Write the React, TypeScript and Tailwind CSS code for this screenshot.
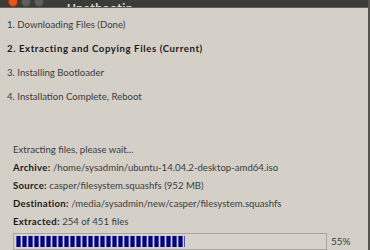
import React from "react";

const steps = [
  { label: "1. Downloading Files (Done)", current: false },
  { label: "2. Extracting and Copying Files (Current)", current: true },
  { label: "3. Installing Bootloader", current: false },
  { label: "4. Installation Complete, Reboot", current: false },
];

const details = [
  { label: "Archive:", value: "/home/sysadmin/ubuntu-14.04.2-desktop-amd64.iso" },
  { label: "Source:", value: "casper/filesystem.squashfs (952 MB)" },
  { label: "Destination:", value: "/media/sysadmin/new/casper/filesystem.squashfs" },
  { label: "Extracted:", value: "254 of 451 files" },
];

function TitleBar() {
  return (
    <div className="h-[8px] shrink-0 bg-[#3c3b37] flex items-end overflow-hidden border-b border-[#5e5c56]">
      <div className="flex items-center gap-[3px] pl-[8px] shrink-0">
        <span className="w-[10px] h-[10px] rounded-full bg-[#e9541f] border border-[#9c3413]" />
        <span className="w-[10px] h-[10px] rounded-full bg-[#5f5e5a] border border-[#494844]" />
        <span className="w-[10px] h-[10px] rounded-full bg-[#5f5e5a] border border-[#494844]" />
      </div>
      <span className="ml-[23px] text-[12px] leading-[12px] font-bold tracking-[0.5px] text-[#dfdbd2] translate-y-[7px]">
        Unetbootin
      </span>
    </div>
  );
}

function ProgressBar({ percent }: { percent: number }) {
  const blocks = Array.from({ length: 30 });
  return (
    <div className="flex items-center gap-[4px]">
      <div className="w-[314px] h-[17px] border border-[#aaa69e] bg-[#d6d2cb] p-[2px] flex">
        <div className="flex gap-[1px] h-full overflow-hidden" style={{ width: `${percent}%` }}>
          {blocks.map((_, i) => (
            <span key={i} className="w-[5px] h-full shrink-0 bg-[#000082] border-x border-[#5050a8]" />
          ))}
        </div>
      </div>
      <span className="text-[10px] text-[#3c3c3c]">{percent}%</span>
    </div>
  );
}

export default function App() {
  return (
    <div className="w-[370px] h-[250px] overflow-hidden bg-[#d4d0c8] flex flex-col border-r-2 border-[#55534e] font-['Lato','Liberation_Sans',sans-serif] text-[9.6px]">
      <TitleBar />
      <div className="flex flex-col pl-[7px] pt-[10px] gap-[10px]">
        {steps.map((s) => (
          <div
            key={s.label}
            className={
              s.current
                ? "leading-[14px] font-bold text-[#1a1a1a] tracking-[0.6px]"
                : "leading-[14px] text-[#3c3c3c]"
            }
          >
            {s.label}
          </div>
        ))}
      </div>
      <div className="flex flex-col pl-[13px] pt-[39px] gap-[4px]">
        <div className="leading-[14px] text-[#3c3c3c]">Extracting files, please wait...</div>
        {details.map((d) => (
          <div key={d.label} className="leading-[14px] text-[#3c3c3c]">
            <span className="font-bold text-[#1a1a1a] tracking-[0.3px]">{d.label}</span> {d.value}
          </div>
        ))}
        <div>
          <ProgressBar percent={55} />
        </div>
      </div>
    </div>
  );
}
